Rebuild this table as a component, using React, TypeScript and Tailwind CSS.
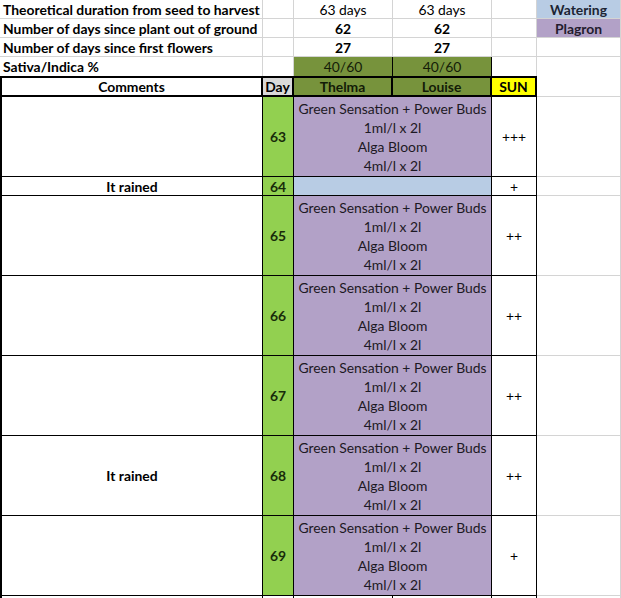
import React from "react";

const grid = "border-[#d4d4d4]";

function Cell({
  className = "",
  children,
}: {
  className?: string;
  children?: React.ReactNode;
}) {
  return (
    <div className={`box-border flex items-center overflow-hidden whitespace-nowrap ${className}`}>
      {children}
    </div>
  );
}

const feeding = [
  "Green Sensation + Power Buds",
  "1ml/l x 2l",
  "Alga Bloom",
  "4ml/l x 2l",
];

interface DayRow {
  day: number;
  comment?: string;
  fed: boolean;
  sun: string;
}

const days: DayRow[] = [
  { day: 63, fed: true, sun: "+++" },
  { day: 64, comment: "It rained", fed: false, sun: "+" },
  { day: 65, fed: true, sun: "++" },
  { day: 66, fed: true, sun: "++" },
  { day: 67, fed: true, sun: "++" },
  { day: 68, comment: "It rained", fed: true, sun: "++" },
  { day: 69, fed: true, sun: "+" },
];

export default function App() {
  return (
    <div
      className="h-[598px] w-[621px] overflow-hidden bg-white text-[13.9px] leading-[19px] text-black"
      style={{ fontFamily: "Lato, 'Open Sans', sans-serif" }}
    >
      <div className="grid grid-cols-[263px_31px_99px_99px_45px_84px] grid-rows-[19px_19px_19px_19px_21px]">
        {/* summary rows */}
        <Cell className={`border-r border-b ${grid} pl-[3px] font-bold`}>
          Theoretical duration from seed to harvest
        </Cell>
        <Cell className={`border-r border-b ${grid}`} />
        <Cell className={`justify-center border-r border-b ${grid}`}>63 days</Cell>
        <Cell className={`justify-center border-r border-b ${grid}`}>63 days</Cell>
        <Cell className={`border-r border-b ${grid}`} />
        <Cell className={`justify-center border-r border-b ${grid} bg-[#b8cce4] font-bold text-[#1c2433]`}>
          Watering
        </Cell>

        <Cell className={`border-r border-b ${grid} pl-[3px] font-bold`}>
          Number of days since plant out of ground
        </Cell>
        <Cell className={`border-r border-b ${grid}`} />
        <Cell className={`justify-center border-r border-b ${grid} font-bold`}>62</Cell>
        <Cell className={`justify-center border-r border-b ${grid} font-bold`}>62</Cell>
        <Cell className={`border-r border-b ${grid}`} />
        <Cell className={`justify-center border-r border-b ${grid} bg-[#b2a1c7] font-bold text-[#231c2e]`}>
          Plagron
        </Cell>

        <Cell className={`border-r border-b ${grid} pl-[3px] font-bold`}>
          Number of days since first flowers
        </Cell>
        <Cell className={`border-r border-b ${grid}`} />
        <Cell className={`justify-center border-r border-b ${grid} font-bold`}>27</Cell>
        <Cell className={`justify-center border-r border-b ${grid} font-bold`}>27</Cell>
        <Cell className={`border-r border-b ${grid}`} />
        <Cell className={`border-r border-b ${grid}`} />

        <Cell className={`border-r ${grid} pl-[3px] font-bold`}>Sativa/Indica %</Cell>
        <Cell className={`border-r ${grid}`} />
        <Cell className="justify-center border-r border-black bg-[#77933c] text-[#141d08]">40/60</Cell>
        <Cell className="justify-center border-r border-black bg-[#77933c] text-[#141d08]">40/60</Cell>
        <Cell className={`border-r ${grid}`} />
        <Cell className={`border-r ${grid}`} />

        {/* header */}
        <Cell className="justify-center border-2 border-black font-bold">Comments</Cell>
        <Cell className="justify-center border-y-2 border-r-2 border-black bg-[#d9d9d9] font-bold">
          Day
        </Cell>
        <Cell className="justify-center border-y-2 border-r-2 border-black bg-[#77933c] font-bold text-[#131c07]">
          Thelma
        </Cell>
        <Cell className="justify-center border-y-2 border-r-2 border-black bg-[#77933c] font-bold text-[#131c07]">
          Louise
        </Cell>
        <Cell className="justify-center border-y-2 border-r-2 border-black bg-[#ffff00] font-bold">
          SUN
        </Cell>
        <Cell className={`border-r border-b ${grid}`} />
      </div>

      {/* daily rows */}
      {days.map((d) => (
        <div
          key={d.day}
          className={`grid grid-cols-[263px_31px_198px_45px_84px] ${
            d.fed ? "h-[80px]" : "h-[19px]"
          }`}
        >
          <Cell className="justify-center border-r border-b border-l-2 border-black font-bold">
            {d.comment}
          </Cell>
          <Cell className="justify-center border-r border-b border-black bg-[#92d050] font-bold text-[#182b0a]">
            {d.day}
          </Cell>
          {d.fed ? (
            <div className="box-border flex flex-col items-center justify-center border-r border-b border-black bg-[#b2a1c7] text-[#1d1924]">
              {feeding.map((line) => (
                <span key={line} className="whitespace-nowrap">
                  {line}
                </span>
              ))}
            </div>
          ) : (
            <Cell className="border-r border-b border-black bg-[#b8cce4]" />
          )}
          <Cell className="justify-center border-r border-b border-black">{d.sun}</Cell>
          <Cell className={`border-r border-b ${grid}`} />
        </div>
      ))}

      {/* next row, cut off */}
      <div className="grid h-[20px] grid-cols-[263px_31px_99px_99px_45px_84px]">
        <Cell className="border-r border-l-2 border-black" />
        <Cell className="border-r border-black" />
        <Cell className="border-r border-black" />
        <Cell className="border-r border-black" />
        <Cell className="border-r border-black" />
        <Cell className={`border-r ${grid}`} />
      </div>
    </div>
  );
}
